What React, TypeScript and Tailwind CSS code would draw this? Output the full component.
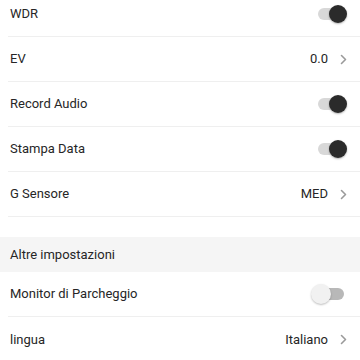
import React from "react";

function Chevron() {
  return (
    <svg width="7" height="11" viewBox="0 0 7 11" className="ml-[12px]">
      <polyline points="1.5,1.5 5.5,5.5 1.5,9.5" fill="none" stroke="#9a9a9a" strokeWidth="1.6" strokeLinecap="round" strokeLinejoin="round" />
    </svg>
  );
}

function Toggle({ on }: { on: boolean }) {
  return (
    <div className="relative w-[36px] h-[20px]">
      <div className={`absolute left-[7px] top-[4px] w-[26px] h-[12px] rounded-full ${on ? "bg-[#d8d8d8]" : "bg-[#b8b8b8]"}`} />
      {on ? (
        <div className="absolute left-[18px] top-[1px] w-[18px] h-[18px] rounded-full bg-[#2b2b2b] shadow-[0_1px_2px_rgba(0,0,0,0.3)]" />
      ) : (
        <div className="absolute left-0 top-0 w-[20px] h-[20px] rounded-full bg-[#f1f1f1] shadow-[0_1px_2px_rgba(0,0,0,0.25)]" />
      )}
    </div>
  );
}

function Row({ label, right, last }: { label: string; right: React.ReactNode; last?: boolean }) {
  return (
    <div className={`ml-[8px] pl-[2px] pr-[13px] h-[45px] flex items-center justify-between ${last ? "" : "border-b border-[#efefef]"}`}>
      <span className="text-[13px] text-[#262626]">{label}</span>
      <div className="flex items-center">{right}</div>
    </div>
  );
}

function Value({ v }: { v: string }) {
  return (
    <>
      <span className="text-[13px] text-[#262626]">{v}</span>
      <Chevron />
    </>
  );
}

export default function App() {
  return (
    <div className="w-[360px] h-[360px] overflow-hidden bg-white" style={{ fontFamily: "Roboto, 'Noto Sans', sans-serif" }}>
      <div className="-mt-[8px]">
        <Row label="WDR" right={<Toggle on />} />
        <Row label="EV" right={<Value v="0.0" />} />
        <Row label="Record Audio" right={<Toggle on />} />
        <Row label="Stampa Data" right={<Toggle on />} />
        <Row label="G Sensore" right={<Value v="MED" />} />
        <div className="h-[20px]" />
        <div className="h-[35px] bg-[#f5f5f5] flex items-center pl-[10px]">
          <span className="text-[13px] text-[#262626]">Altre impostazioni</span>
        </div>
        <Row label="Monitor di Parcheggio" right={<Toggle on={false} />} />
        <Row label="lingua" right={<Value v="Italiano" />} last />
      </div>
    </div>
  );
}
